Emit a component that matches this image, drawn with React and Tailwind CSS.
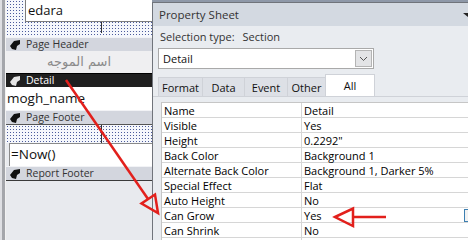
import React from 'react'

const ui = "font-['Open_Sans','Noto_Sans',sans-serif]"

const dots = 'bg-[#f5f7fc] bg-[radial-gradient(circle,#4b5b9c_0.75px,transparent_1px)] bg-[length:3px_3px]'

const SectionIcon = ({ fill }) => (
  <svg width="11" height="10" viewBox="0 0 11 10" className="shrink-0">
    <path d="M10 0 L4 1 L0 6 L2 9 L6 10 L7 6 L10 4 Z" fill={fill} />
  </svg>
)

const SectionBar = ({ label, dark }) => (
  <div
    className={`h-[14px] flex items-center gap-[5px] pl-[4px] border-t ${
      dark ? 'bg-[#1f1f1f] text-white border-[#000]' : 'bg-[#d3d6de] text-[#333] border-[#f2f3f6]'
    }`}
  >
    <SectionIcon fill={dark ? '#e5e5e5' : '#111'} />
    <span className={`${ui} text-[10.5px] leading-none`}>{label}</span>
  </div>
)

const rows = [
  ['Name', 'Detail'],
  ['Visible', 'Yes'],
  ['Height', '0.2292"'],
  ['Back Color', 'Background 1'],
  ['Alternate Back Color', 'Background 1, Darker 5%'],
  ['Special Effect', 'Flat'],
  ['Auto Height', 'No'],
  ['Can Grow', 'Yes'],
  ['Can Shrink', 'No'],
  ['', ''],
]

const tabs = [
  ['Format', 'w-[44px]'],
  ['Data', 'w-[42px]'],
  ['Event', 'w-[43px]'],
  ['Other', 'w-[38px]'],
]

export default function App() {
  return (
    <div className="relative w-[468px] h-[240px] overflow-hidden flex bg-[#e8eaee]">
      {/* Report design surface */}
      <div className="w-[152px] shrink-0 flex">
        <div className="w-[2px] bg-[#dedfe3]" />
        <div className="w-[3px] bg-[#a4a6ab]" />
        <div className="w-px bg-[#f2f2f2]" />
        <div className="flex-1 flex flex-col min-w-0">
          {/* report header area */}
          <div className={`h-[37px] ${dots} flex flex-col`}>
            <div className="h-[22px] ml-[19px] bg-white border-l border-b border-[#7d7d7d] flex items-center pl-[2px]">
              <span className={`${ui} text-[13px] leading-none text-[#111]`}>edara</span>
            </div>
            <div className="ml-[95px] w-px h-[11px] bg-[#333]" />
          </div>
          <SectionBar label="Page Header" />
          <div className="h-[22px] bg-[#efeff1] flex items-center justify-center">
            <span dir="rtl" className="font-['DejaVu_Sans',sans-serif] text-[13px] text-[#8a8a8a]">
              اسم الموجه
            </span>
          </div>
          <SectionBar label="Detail" dark />
          <div className="h-[23px] bg-white flex items-center pl-[1px]">
            <span className={`${ui} text-[13.5px] leading-none text-[#111]`}>mogh_name</span>
          </div>
          <SectionBar label="Page Footer" />
          <div className={`h-[19px] ${dots} border-t border-[#555]`}>
            <div className="ml-[95px] w-px h-full bg-[#333]" />
          </div>
          <div className="h-[23px] ml-[3px] bg-white border-l border-t border-[#8a8a8a] flex items-center pl-[1px]">
            <span className={`${ui} text-[13.5px] leading-none text-[#111]`}>=Now()</span>
          </div>
          <SectionBar label="Report Footer" />
          <div className="flex-1 bg-[#e8eaee] border-t border-[#3a3a3a]" />
        </div>
      </div>

      {/* Property Sheet */}
      <div className="flex-1 flex flex-col min-w-0">
        <div className="h-[5px] bg-[#dfe3ea] border-t-2 border-[#8e98a8]" />
        <div className={`flex-1 flex flex-col border-l border-t border-[#70747b] bg-[#e9ecf0] ${ui}`}>
          <div className="h-[23px] bg-[#d3d9e1] flex items-center pl-[6px]">
            <span className="text-[11.5px] text-[#333] leading-none">Property Sheet</span>
            <svg className="ml-auto" width="5" height="6" viewBox="0 0 5 6">
              <path d="M0 1 L5 1 L5 5 Z" fill="#222" />
            </svg>
          </div>
          <div className="h-[20px] flex items-center pl-[7px] text-[11px] text-[#333] leading-none">
            <span>Selection type:</span>
            <span className="ml-[8px]">Section</span>
          </div>
          <div className="mt-[2px] ml-[5px] w-[216px] h-[21px] bg-white border border-[#a9a9a9] flex items-center">
            <span className="pl-[4px] text-[11px] text-[#111] leading-none">Detail</span>
            <div className="ml-auto mr-px w-[17px] h-[17px] bg-[#e3e4e6] border border-[#b4b4b4] flex items-center justify-center">
              <svg width="9" height="6" viewBox="0 0 9 6">
                <path d="M1 1 L4.5 4.5 L8 1" stroke="#555" strokeWidth="1" fill="none" />
              </svg>
            </div>
          </div>
          <div className="mt-[5px] ml-[5px] flex items-end h-[22px]">
            {tabs.map(([t, w]) => (
              <div
                key={t}
                className={`${w} h-[19px] bg-[#dde0e6] border-t border-l border-[#cfd2d8] flex items-center justify-center text-[11px] text-[#111] leading-none`}
              >
                {t}
              </div>
            ))}
            <div className="w-[50px] h-[22px] bg-white border-t border-x border-[#cfd2d8] flex items-center justify-center text-[11px] text-[#111] leading-none">
              All
            </div>
          </div>
          <div className="h-px bg-[#cfd2d8]" />
          <div className="mt-[5px] ml-[8px] flex-1 bg-white border-l border-t border-[#c6c6c6]">
            {rows.map(([k, v], i) => (
              <div key={i} className="h-[15px] flex border-b border-[#d6d6d6] text-[11px] leading-none text-[#000]">
                <div className="w-[140px] shrink-0 border-r border-[#d6d6d6] flex items-center pl-[2px]">{k}</div>
                <div className="flex-1 flex items-center pl-[2px]">
                  {v}
                  {k === 'Can Grow' && (
                    <div className="ml-auto w-[4px] h-[13px] border-l border-y border-[#3c7fb1] bg-[#f2f2f2]" />
                  )}
                </div>
              </div>
            ))}
          </div>
        </div>
      </div>

      {/* annotation arrows */}
      <svg className="absolute inset-0 pointer-events-none" width="468" height="240" viewBox="0 0 468 240">
        <g stroke="#e2201c" strokeWidth="2.5" fill="none" strokeLinejoin="miter">
          <line x1="66" y1="80" x2="148" y2="199" />
          <path d="M158 213 L155 194.5 L141.5 203.5 Z" />
          <line x1="353" y1="217" x2="386" y2="217" />
          <path d="M335 217 L353 208.5 L353 226 Z" />
        </g>
      </svg>
    </div>
  )
}
